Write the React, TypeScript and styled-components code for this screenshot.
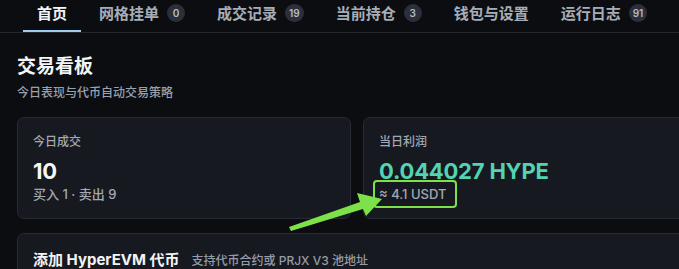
import React from 'react'
import styled, { createGlobalStyle } from 'styled-components'

const GlobalStyle = createGlobalStyle`
  html, body {
    margin: 0;
    padding: 0;
    background: #0c0d11;
    overflow: hidden;
  }
  body {
    font-family: 'Inter', 'Noto Sans CJK SC', sans-serif;
    color: #eef0f3;
  }
`

const Page = styled.div`
  position: relative;
  width: 720px;
  min-height: 269px;
  background: #0c0d11;
`

const TabBar = styled.div`
  display: flex;
  gap: 4px;
  padding-left: 23px;
  height: 32px;
  border-bottom: 1px solid #23262e;
`

const Tab = styled.div<{ active?: boolean }>`
  position: relative;
  display: flex;
  align-items: center;
  gap: 8px;
  padding: 0 14px 7px;
  font-size: 15px;
  font-weight: 600;
  color: ${({ active }) => (active ? '#f4f5f7' : '#a7adb8')};
  &::after {
    content: '';
    display: ${({ active }) => (active ? 'block' : 'none')};
    position: absolute;
    left: 0;
    right: 0;
    bottom: 0;
    height: 2px;
    background: #9fcdec;
  }
`

const Badge = styled.span`
  min-width: 18px;
  height: 18px;
  padding: 0 4px;
  box-sizing: border-box;
  border-radius: 9px;
  background: #2a2f3a;
  color: #b7bcc6;
  font-size: 10px;
  font-weight: 600;
  display: inline-flex;
  align-items: center;
  justify-content: center;
`

const Main = styled.div`
  padding: 21px 0 0 17px;
`

const Title = styled.h1`
  margin: 0;
  font-size: 19px;
  line-height: 26px;
  font-weight: 700;
  color: #f3f4f6;
`

const Subtitle = styled.div`
  margin-top: 4px;
  font-size: 12px;
  line-height: 18px;
  font-weight: 500;
  color: #9aa1ad;
`

const Stats = styled.div`
  margin-top: 15px;
  display: grid;
  grid-template-columns: 334px 334px;
  gap: 12px;
`

const Card = styled.div`
  box-sizing: border-box;
  background: #171920;
  border: 1px solid #272a33;
  border-radius: 7px;
  padding: 15px;
`

const Label = styled.div`
  font-size: 12px;
  line-height: 18px;
  font-weight: 500;
  color: #a3a9b4;
`

const Value = styled.div<{ accent?: boolean }>`
  margin-top: 6px;
  font-size: 22px;
  line-height: 28px;
  font-weight: 700;
  letter-spacing: -0.2px;
  color: ${({ accent }) => (accent ? '#52d3b3' : '#f5f6f8')};
`

const Sub = styled.div`
  font-size: 13px;
  line-height: 18px;
  font-weight: 500;
  color: #a3a9b4;
`

const Highlight = styled.span`
  position: relative;
  display: inline-block;
  &::after {
    content: '';
    position: absolute;
    left: -6px;
    right: -11px;
    top: -5px;
    bottom: -5px;
    border: 2.5px solid #7de24a;
    border-radius: 4px;
  }
`

const AddCard = styled(Card)`
  margin-top: 14px;
  width: 680px;
  padding: 16px 15px;
  display: flex;
  align-items: baseline;
  gap: 12px;
`

const AddTitle = styled.div`
  font-size: 15px;
  line-height: 20px;
  font-weight: 700;
  color: #f3f4f6;
`

const AddHint = styled.div`
  font-size: 12px;
  font-weight: 500;
  color: #959ca8;
`

const Arrow = styled.svg`
  position: absolute;
  left: 0;
  top: 0;
  pointer-events: none;
`

const tabs = [
  { name: '首页', active: true },
  { name: '网格挂单', count: '0' },
  { name: '成交记录', count: '19' },
  { name: '当前持仓', count: '3' },
  { name: '钱包与设置' },
  { name: '运行日志', count: '91' },
]

const App = () => {
  return (
    <Page>
      <GlobalStyle />
      <TabBar>
        {tabs.map((t) => (
          <Tab key={t.name} active={t.active}>
            {t.name}
            {t.count !== undefined && <Badge>{t.count}</Badge>}
          </Tab>
        ))}
      </TabBar>
      <Main>
        <Title>交易看板</Title>
        <Subtitle>今日表现与代币自动交易策略</Subtitle>
        <Stats>
          <Card>
            <Label>今日成交</Label>
            <Value>10</Value>
            <Sub>买入 1 · 卖出 9</Sub>
          </Card>
          <Card>
            <Label>当日利润</Label>
            <Value accent>0.044027 HYPE</Value>
            <Sub>
              <Highlight>≈ 4.1 USDT</Highlight>
            </Sub>
          </Card>
        </Stats>
        <AddCard>
          <AddTitle>添加 HyperEVM 代币</AddTitle>
          <AddHint>支持代币合约或 PRJX V3 池地址</AddHint>
        </AddCard>
      </Main>
      {/* annotation arrow pointing at the USDT figure */}
      <Arrow width="679" height="269" viewBox="0 0 679 269">
        <polygon
          points="289,227 360,202 357,193 382,199 366,216 363,209 291,231"
          fill="#7de24a"
        />
      </Arrow>
    </Page>
  )
}

export default App
